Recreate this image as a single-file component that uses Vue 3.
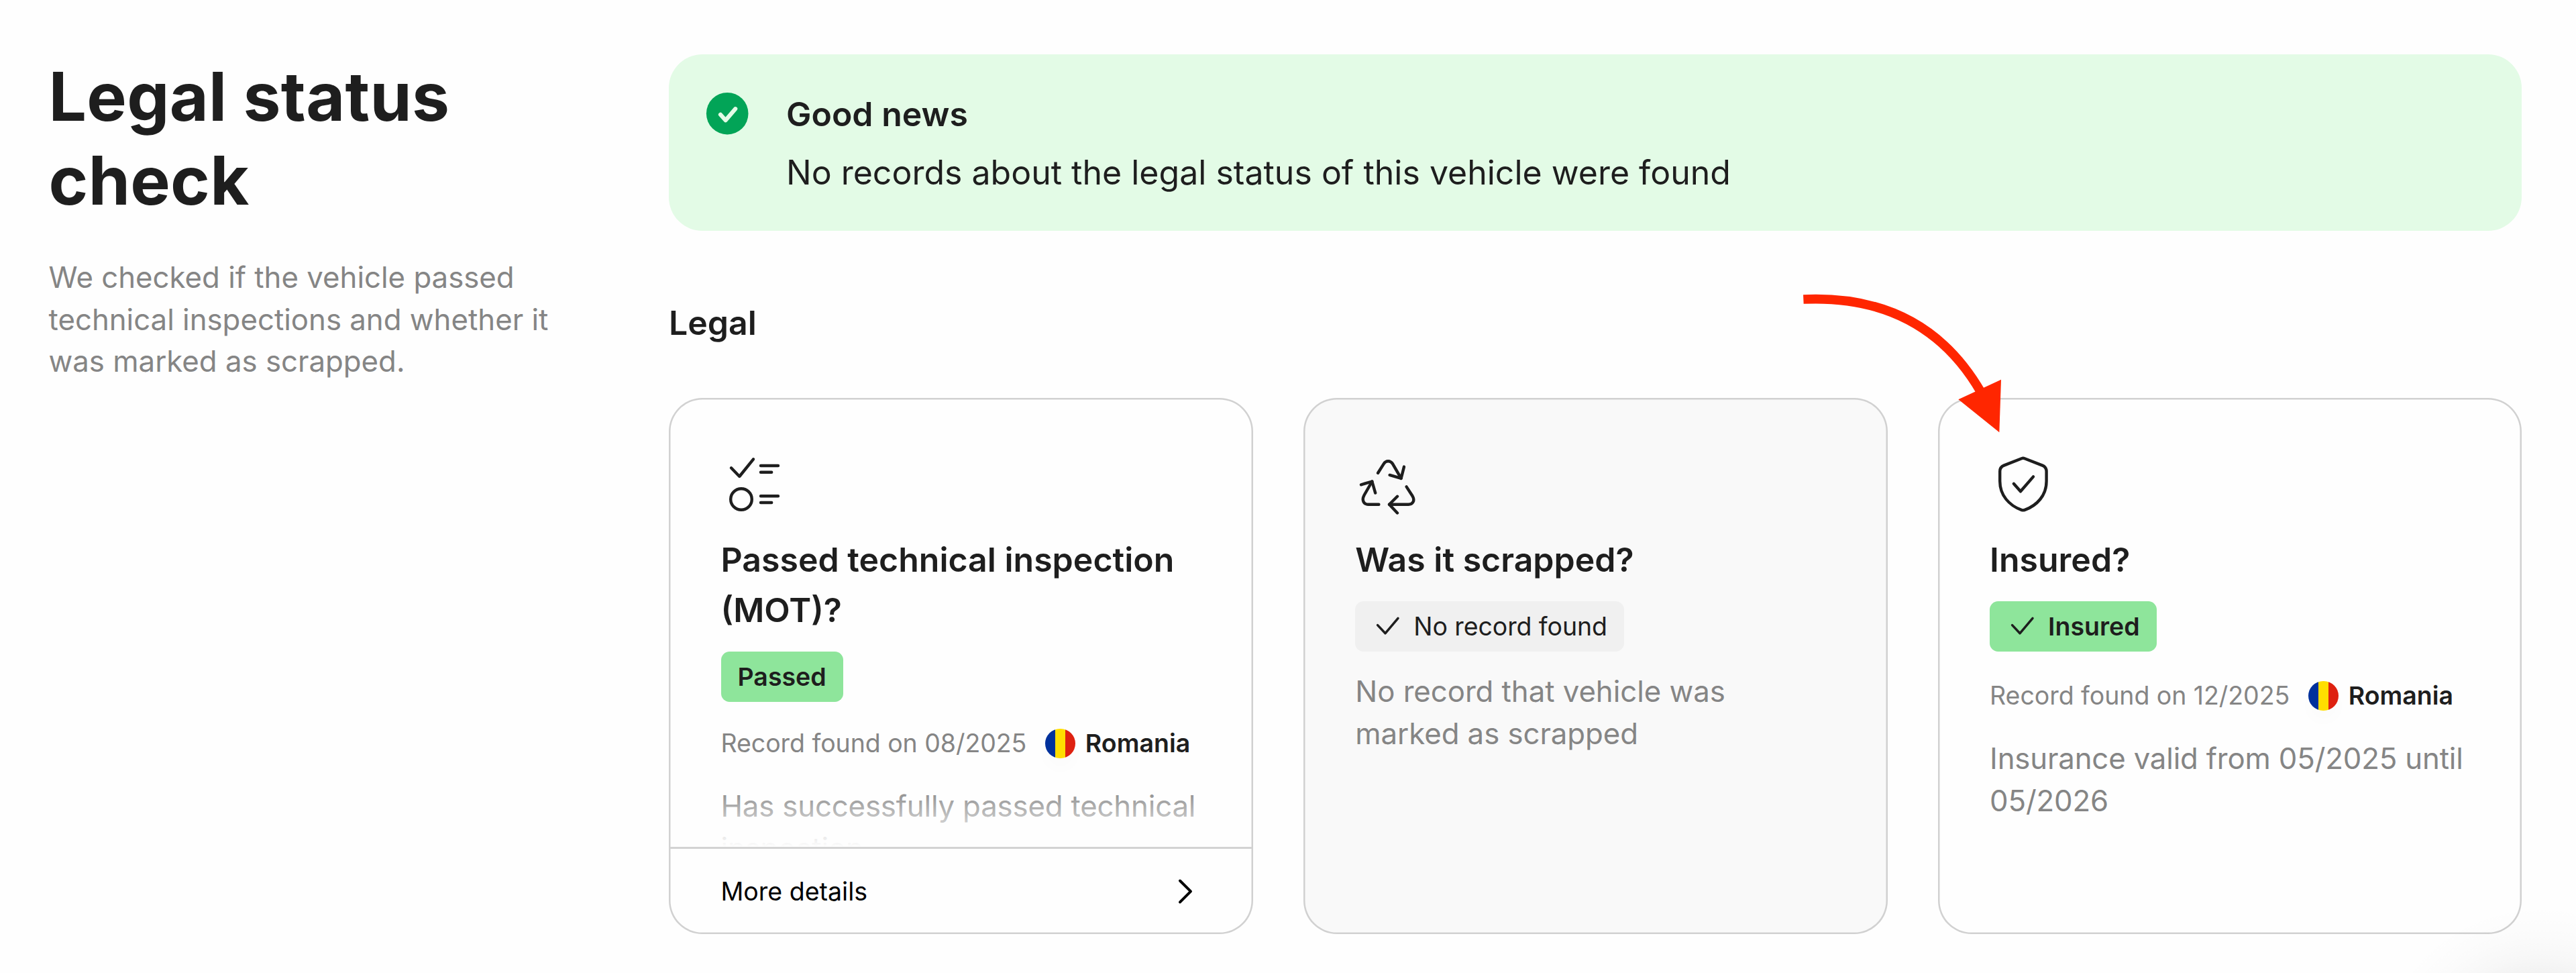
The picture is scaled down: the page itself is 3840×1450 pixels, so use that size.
<script setup>
const cards = [
  {
    id: 'mot',
    icon: 'checklist',
    title: 'Passed technical inspection (MOT)?',
    badge: 'Passed',
    tone: 'positive',
    record: 'Record found on 08/2025',
    country: 'Romania',
    text: 'Has successfully passed technical inspection',
    more: 'More details',
  },
  {
    id: 'scrapped',
    icon: 'recycle',
    title: 'Was it scrapped?',
    badge: 'No record found',
    tone: 'neutral',
    check: true,
    muted: true,
    text: 'No record that vehicle was marked as scrapped',
  },
  {
    id: 'insured',
    icon: 'shield',
    title: 'Insured?',
    badge: 'Insured',
    tone: 'positive',
    check: true,
    record: 'Record found on 12/2025',
    country: 'Romania',
    text: 'Insurance valid from 05/2025 until 05/2026',
  },
]
</script>

<template>
  <main class="page">
    <aside class="intro">
      <h1>Legal status check</h1>
      <p>We checked if the vehicle passed technical inspections and whether it was marked as scrapped.</p>
    </aside>

    <section class="content">
      <div class="banner">
        <svg class="banner-icon" viewBox="0 0 75 75" aria-hidden="true">
          <circle cx="37.2" cy="38.2" r="31.3" fill="#02a457" />
          <path d="M27 39.7 L34.6 48.2 L49.2 31.2" fill="none" stroke="#e3fbe6" stroke-width="6.2" stroke-linecap="round" stroke-linejoin="round" />
        </svg>
        <div class="banner-text">
          <strong>Good news</strong>
          <span>No records about the legal status of this vehicle were found</span>
        </div>
      </div>

      <h2>Legal</h2>

      <div class="cards">
        <article v-for="card in cards" :key="card.id" class="card" :class="[card.id, { muted: card.muted }]">
          <div class="card-body" :class="{ clipped: card.more }">
            <svg class="card-icon" viewBox="0 0 100 100" aria-hidden="true">
              <g v-if="card.icon === 'checklist'">
                <path d="M15 26.3 L27.3 39 L48 13.3" />
                <path d="M59 23 H85 M59 32.7 H75.2 M59 68.3 H85 M59 78 H75.2" />
                <circle cx="30" cy="73" r="15.8" />
              </g>
              <g v-else-if="card.icon === 'recycle'">
                <path d="M34 34 L42.3 20.8 C46 14.8 52.5 14.8 56.4 20.8 L68.6 41.9" />
                <path d="M73 24.6 L68.6 41.9 L51.6 36.9" />
                <path d="M25.3 46.5 L13.5 67 C9.5 74.5 12.8 80.8 20 80.8 H35.4" />
                <path d="M9 51.3 L25.3 46.5 L30.2 63.6" />
                <path d="M76.6 54.4 L85.6 68.3 C89.6 75 86 80.8 79.5 80.8 H51" />
                <path d="M63 68.8 L51 80.8 L63 93.4" />
              </g>
              <g v-else>
                <path d="M47.6 12.2 Q49.8 11.4 52 12.2 L78.6 22.6 Q84.6 25 84.6 31.5 V46 C84.6 67.5 70.5 82.2 52.4 88.9 Q49.8 89.8 47.2 88.9 C29.2 82.2 15.2 67.5 15.2 46 V31.5 Q15.2 25 21.2 22.6 Z" />
                <path d="M35.8 49.8 L46 61.3 L65 39.4" />
              </g>
            </svg>

            <h3>{{ card.title }}</h3>

            <div class="badge" :class="card.tone">
              <svg v-if="card.check" viewBox="0 0 50 50" aria-hidden="true">
                <path d="M8.6 23.6 L20 35.8 L39 13.4" />
              </svg>
              <span>{{ card.badge }}</span>
            </div>

            <div v-if="card.record" class="record">
              <span>{{ card.record }}</span>
              <i class="flag"></i>
              <b>{{ card.country }}</b>
            </div>

            <p class="description">{{ card.text }}</p>
          </div>

          <footer v-if="card.more">
            <span>{{ card.more }}</span>
            <svg viewBox="0 0 50 50" aria-hidden="true">
              <path d="M19 9.5 L35 25.4 L19 41.3" />
            </svg>
          </footer>
        </article>
      </div>
    </section>

    <svg class="arrow" viewBox="0 0 1200 810" aria-hidden="true">
      <path d="M85 138 C400 124 690 225 880 555" fill="none" stroke="#ff2600" stroke-width="41" />
      <path d="M969 497 L778 586 L961 733 Z" fill="#ff2600" />
    </svg>
    <div class="glow"></div>
  </main>
</template>

<style>
body {
  margin: 0;
  background: #fefefe;
}
</style>

<style scoped>
.page {
  position: relative;
  box-sizing: border-box;
  width: 3840px;
  height: 1450px;
  padding: 81px 80.6px 0 72.5px;
  display: grid;
  grid-template-columns: 780px 2762.4px;
  column-gap: 144.5px;
  overflow: hidden;
  background: #fefefe;
  color: #1e1e1e;
  font-family: Inter, sans-serif;
}

h1,
h2,
h3,
p {
  margin: 0;
}

h1 {
  width: 700px;
  font-size: 100px;
  font-weight: 700;
  line-height: 125px;
  letter-spacing: 0.3px;
}

.intro p {
  margin-top: 52px;
  color: #858585;
  font-size: 43.75px;
  line-height: 62.5px;
}

.content {
  padding-top: 0.3px;
}

.banner {
  display: flex;
  gap: 50px;
  box-sizing: border-box;
  height: 262.5px;
  padding: 50px;
  border-radius: 50px;
  background: #e3fbe6;
}

.banner-icon {
  width: 75px;
  height: 75px;
}

.banner-text {
  display: flex;
  flex-direction: column;
  gap: 12px;
  padding-top: 1.5px;
  font-size: 50px;
  line-height: 75px;
}

strong,
b {
  font-weight: 600;
}

h2 {
  margin: 100px 0 74px;
  font-size: 50px;
  font-weight: 600;
  line-height: 75px;
}

.cards {
  display: grid;
  grid-template-columns: repeat(3, 1fr);
  gap: 75px;
  height: 799px;
}

.card {
  display: flex;
  flex-direction: column;
  min-height: 0;
  border-radius: 50px;
  box-shadow: inset 0 0 0 2.5px #d1d1d1;
}

.card.muted {
  background: #f9f9f9;
}

.card-body {
  position: relative;
  flex: 1;
  min-height: 0;
  padding: 78px 70px 0 77.5px;
  overflow: hidden;
}

.clipped::after {
  content: '';
  position: absolute;
  right: 20px;
  bottom: 0;
  left: 20px;
  height: 90px;
  background: linear-gradient(rgba(254, 254, 254, 0), #fefefe);
}

.card-icon {
  display: block;
  width: 100px;
  height: 100px;
  fill: none;
  stroke: #1e1e1e;
  stroke-width: 4.4;
  stroke-linecap: round;
  stroke-linejoin: round;
}

h3 {
  margin: 26px 0 24px;
  font-size: 50px;
  font-weight: 600;
  line-height: 75px;
}

.badge {
  display: flex;
  align-items: center;
  gap: 12px;
  width: fit-content;
  height: 75px;
  padding: 0 25px;
  border-radius: 12.5px;
  font-size: 37.5px;
}

.badge.positive {
  background: #8ee59b;
  font-weight: 600;
}

.badge.neutral {
  background: #f0f0f0;
  letter-spacing: -0.1px;
}

.badge svg {
  width: 50px;
  height: 50px;
  fill: none;
  stroke: #1e1e1e;
  stroke-width: 3.5;
  stroke-linecap: round;
  stroke-linejoin: round;
}

.record {
  display: flex;
  align-items: center;
  margin-top: 34px;
  color: #858585;
  font-size: 37.5px;
  line-height: 56px;
  letter-spacing: -0.06px;
  white-space: nowrap;
}

.insured .record {
  margin-top: 38px;
}

.record b {
  color: #1e1e1e;
  letter-spacing: 0;
}

.flag {
  width: 44.5px;
  height: 44.5px;
  margin: 0 15px 0 28px;
  border-radius: 50%;
  background: linear-gradient(90deg, #00319c 0 33.3%, #ffde00 33.3% 66.6%, #de2110 66.6%);
  box-shadow: 0 15px 25px rgba(0, 0, 0, 0.015);
}

.description {
  margin-top: 35.5px;
  color: #858585;
  font-size: 43.75px;
  line-height: 62.5px;
  letter-spacing: -0.17px;
}

.scrapped .description {
  margin-top: 29.5px;
  max-width: 640px;
  letter-spacing: -0.05px;
}

footer {
  display: flex;
  align-items: center;
  justify-content: space-between;
  box-sizing: border-box;
  height: 130px;
  margin: 0 2px;
  padding: 0 76px 0 75.5px;
  border-top: 3px solid #d3d3d3;
  color: #000;
  font-size: 37.5px;
}

footer svg {
  width: 50px;
  height: 50px;
  fill: none;
  stroke: #000;
  stroke-width: 4;
  stroke-linecap: round;
  stroke-linejoin: round;
}

.arrow {
  position: absolute;
  top: 400px;
  left: 2660px;
  width: 400px;
  height: 270px;
}

.glow {
  position: absolute;
  right: 0;
  bottom: 0;
  width: 300px;
  height: 150px;
  background: radial-gradient(circle at 247px 299px, rgba(0, 0, 0, 0.052) 145px, rgba(0, 0, 0, 0.028) 173px, rgba(0, 0, 0, 0.01) 206px, rgba(0, 0, 0, 0) 250px);
}
</style>
